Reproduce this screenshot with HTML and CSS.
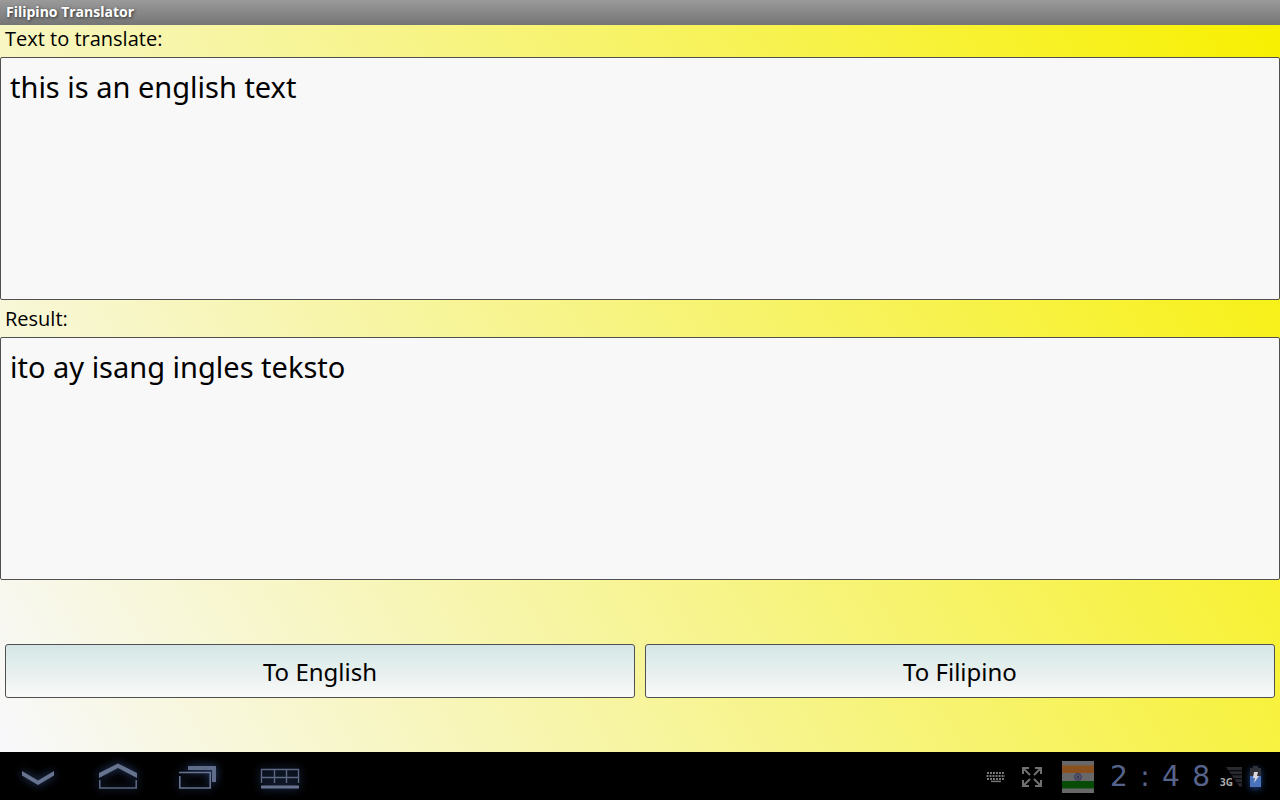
FILE: index.html
```html
<!DOCTYPE html>
<html lang="en">
<head>
    <meta charset="UTF-8">
    <meta name="viewport" content="width=device-width, initial-scale=1.0">
    <title>Filipino Translator</title>
    <link rel="stylesheet" href="styles.css">
</head>
<body>
    <h1 class="title-bar">Filipino Translator</h1>

    <form class="translator">
        <label class="source-label" for="source">Text to translate:</label>
        <textarea id="source" name="source" spellcheck="false">this is an english text</textarea>
        <label class="result-label" for="result">Result:</label>
        <textarea id="result" name="result" spellcheck="false" readonly>ito ay isang ingles teksto</textarea>
        <div class="actions">
            <button type="button">To English</button>
            <button type="button">To Filipino</button>
        </div>
    </form>

    <footer class="system-bar">
        <nav class="nav-keys">
            <button type="button" aria-label="Back">
                <svg width="80" height="48" viewBox="0 0 80 48">
                    <path fill="#68748f" d="M22 19L38 28.5L54 19V23.5L38 33L22 23.5Z"/>
                </svg>
            </button>
            <button type="button" aria-label="Home">
                <svg width="80" height="48" viewBox="0 0 80 48">
                    <path fill="#68748f" d="M19 21L38 11.5L57 21V26L38 16L19 26Z"/>
                    <path fill="none" stroke="#596580" stroke-width="1.6" d="M19.8 28V36H56.2V28"/>
                </svg>
            </button>
            <button type="button" aria-label="Recent apps">
                <svg width="80" height="48" viewBox="0 0 80 48">
                    <path fill="#606d8a" d="M28 14H56V30H52V18H28Z"/>
                    <path fill="none" stroke="#68748f" stroke-width="1.6" d="M19 20.5H50.2V36H19.8V24"/>
                </svg>
            </button>
            <button type="button" aria-label="Keypad">
                <svg width="80" height="48" viewBox="0 0 80 48">
                    <path fill="none" stroke="#5b6783" stroke-width="1.4" d="M21.5 31V17.5H58.5V31M21.5 25.5H58.5M34.5 17.5V31M46.5 17.5V31"/>
                    <path fill="#68748f" d="M21 33.5H59V36.5H21Z"/>
                </svg>
            </button>
        </nav>

        <div class="status">
            <div class="tools">
                <svg width="20" height="12" viewBox="0 0 20 12">
                    <g fill="none" stroke="#777" stroke-width="1.8">
                        <path stroke-dasharray="2 1" d="M1 2H19"/>
                        <path stroke-dasharray="2 1" d="M0.5 5H19"/>
                        <path stroke-dasharray="2 1" d="M1 8H19"/>
                        <path stroke-width="1.4" d="M5 10.4H15"/>
                    </g>
                </svg>
                <svg width="20" height="20" viewBox="0 0 20 20">
                    <g fill="none" stroke="#707070" stroke-width="2">
                        <path d="M7 1H1V7M1 1L8 8"/>
                        <path d="M13 1H19V7M19 1L12 8"/>
                        <path d="M7 19H1V13M1 19L8 12"/>
                        <path d="M13 19H19V13M19 19L12 12"/>
                    </g>
                </svg>
            </div>
            <div class="tools">
                <svg width="32" height="32" viewBox="0 0 32 32">
                    <path fill="#686868" d="M0 0H32V32H0Z"/>
                    <path fill="#8a501d" d="M0 4.5H32V12H0Z"/>
                    <path fill="#064b06" d="M0 20H32V27.5H0Z"/>
                    <g fill="none" stroke="#34345f">
                        <circle cx="16" cy="16" r="3.4"/>
                        <path stroke-width="0.5" d="M16 12.6V19.4M12.6 16H19.4M13.6 13.6L18.4 18.4M18.4 13.6L13.6 18.4"/>
                    </g>
                    <circle cx="16" cy="16" r="1.2" fill="#34345f"/>
                </svg>
                <time class="clock" datetime="14:48"><span>2</span><span>:</span><span>4</span><span>8</span></time>
            </div>
            <div class="power">
                <div class="signal">
                    <span>3G</span>
                    <svg width="16" height="20" viewBox="0 0 16 20">
                        <path fill="#292930" d="M0 0H16V3.2H2.2ZM2.9 4.2H16V7.2H5ZM5.6 8.2H16V11.2H7.7ZM8.4 12.2H16V15.2H10.4ZM11 16.2H16V19.5H13.2Z"/>
                    </svg>
                </div>
                <svg class="battery" width="11" height="22" viewBox="0 0 11 22">
                    <path fill="#303038" d="M3 0H8V2H11V10H0V2H3Z"/>
                    <path fill="#4a72bd" d="M0 10H11V21H0Z"/>
                    <path fill="#d8d8dc" d="M4 6H8L7 10H9L4 17L5 12H3Z"/>
                </svg>
            </div>
        </div>
    </footer>
</body>
</html>
```
FILE: styles.css
```css
* {
    box-sizing: border-box;
}

body {
    display: flex;
    flex-direction: column;
    min-height: 100vh;
    margin: 0;
    font-family: 'Open Sans', sans-serif;
    color: #000;
}

.title-bar {
    margin: 0;
    padding: 0 6px;
    background: linear-gradient(#9a9a9a, #757575);
    color: #fff;
    font-size: 14px;
    line-height: 24px;
    padding-bottom: 1px;
    text-shadow: 1px 1px 3px #333;
}

.translator {
    flex: 1;
    display: flex;
    flex-direction: column;
    background: linear-gradient(60deg, #f8f8fc 0%, #f7f484 50%, #f8f000 100%);
}

.translator label {
    padding: 0 5px;
    font-size: 20px;
}

.source-label {
    line-height: 28px;
    margin-bottom: 4px;
}

.result-label {
    line-height: 37px;
}

textarea {
    flex: 1;
    width: 100%;
    padding: 9px;
    border: 1px solid #505050;
    border-radius: 2px;
    outline: none;
    resize: none;
    background: #f8f8f8;
    color: #000;
    font-family: 'Noto Sans', sans-serif;
    font-size: 29px;
    line-height: 40px;
}

.actions {
    display: flex;
    gap: 10px;
    padding: 64px 5px 54px;
}

.actions button {
    flex: 1;
    height: 54px;
    border: 1px solid #505050;
    border-radius: 3px;
    background: linear-gradient(#d5e5e6, #e0efec 35%, #e9eeee 55%, #f9fbf9);
    color: #000;
    font-family: 'Noto Sans', sans-serif;
    font-size: 24px;
}

.system-bar {
    display: flex;
    justify-content: space-between;
    height: 48px;
    background: #000;
}

.nav-keys {
    display: flex;
}

.nav-keys button {
    padding: 0;
    border: 0;
    background: none;
}

.nav-keys svg {
    display: block;
    filter: drop-shadow(0 0 4px #304a80);
}

.status {
    display: flex;
    align-items: center;
    gap: 20px;
    padding: 2px 19px 0 0;
}

.tools {
    display: flex;
    align-items: center;
    gap: 16px;
}

.clock {
    display: flex;
    justify-content: space-between;
    width: 100px;
    color: #56648c;
    font-family: 'DejaVu Sans', sans-serif;
    font-size: 28px;
    line-height: 32px;
}

.power {
    display: flex;
    align-items: center;
    gap: 8px;
    margin-left: -10px;
}

.signal {
    display: flex;
    align-items: flex-end;
    color: #aaa;
    font-size: 10px;
    font-weight: bold;
    line-height: 10px;
}

/* bars lean over the network label */
.signal svg {
    margin-left: -7px;
}

.battery {
    filter: drop-shadow(0 2px 3px #1c3f80);
}
```
